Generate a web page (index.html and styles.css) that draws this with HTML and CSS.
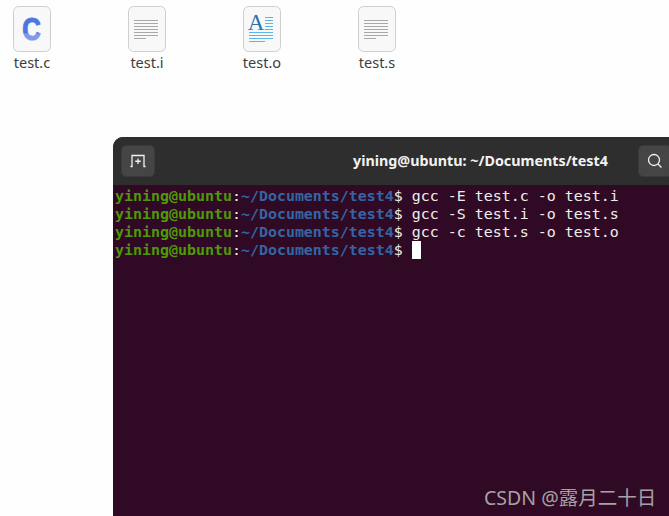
FILE: index.html
```html
<!DOCTYPE html>
<html lang="en">
<head>
<meta charset="utf-8">
<title>Terminal</title>
<link rel="stylesheet" href="styles.css">
</head>
<body>
<div class="files">
  <div class="file">
    <svg class="icon" width="38" height="46" viewBox="0 0 38 46">
      <defs><linearGradient id="cg" x1="0" y1="0" x2="0" y2="1"><stop offset="0.6" stop-color="#4f76e0"/><stop offset="0.65" stop-color="#7d9be8"/><stop offset="1" stop-color="#7d9be8"/></linearGradient></defs>
      <rect class="sheet" x="0.5" y="0.5" width="37" height="45" rx="5"/>
      <text class="c-letter" transform="translate(18.500 34) scale(0.8 1)" fill="url(#cg)">C</text>
    </svg>
    <span class="name">test.c</span>
  </div>
  <div class="file">
    <svg class="icon" width="38" height="46" viewBox="0 0 38 46">
      <rect class="sheet" x="0.5" y="0.5" width="37" height="45" rx="5"/>
      <path class="lines" d="M6 14.500H30M6 17.500H30M6 20.500H30M6 23.500H30M6 26.500H30M6 29.500H30M6 32.500H18"/>
    </svg>
    <span class="name">test.i</span>
  </div>
  <div class="file">
    <svg class="icon" width="38" height="46" viewBox="0 0 38 46">
      <rect class="sheet" x="0.5" y="0.5" width="37" height="45" rx="5"/>
      <text class="a-letter" x="13" y="24">A</text>
      <path class="blue-lines" d="M22 11.500H30M22 14.500H30M22 17.500H30M22 20.500H30M22 23.500H30M6 26.500H30M6 29.500H30M6 32.500H30M6 35.500H22"/>
    </svg>
    <span class="name">test.o</span>
  </div>
  <div class="file">
    <svg class="icon" width="38" height="46" viewBox="0 0 38 46">
      <rect class="sheet" x="0.5" y="0.5" width="37" height="45" rx="5"/>
      <path class="lines" d="M6 14.500H30M6 17.500H30M6 20.500H30M6 23.500H30M6 26.500H30M6 29.500H30M6 32.500H18"/>
    </svg>
    <span class="name">test.s</span>
  </div>
</div>
<section class="terminal">
  <header class="titlebar">
    <div class="btn">
      <svg width="16" height="14" viewBox="0 0 16 14"><path class="tab-icon" d="M0.500 12.500H2V1.500H14V12.500H15.500M8 4.500V10M5.250 7.250H10.750"/></svg>
    </div>
    <div class="title">yining@ubuntu: ~/Documents/test4</div>
    <div class="btn">
      <svg width="18" height="18" viewBox="0 0 18 18"><circle class="glass" cx="8" cy="8" r="5.500"/><path class="glass" d="M12 12L15.500 15.500"/></svg>
    </div>
  </header>
  <div class="screen">
    <div class="line"><b class="user">yining@ubuntu</b>:<b class="path">~/Documents/test4</b>$ gcc -E test.c -o test.i</div>
    <div class="line"><b class="user">yining@ubuntu</b>:<b class="path">~/Documents/test4</b>$ gcc -S test.i -o test.s</div>
    <div class="line"><b class="user">yining@ubuntu</b>:<b class="path">~/Documents/test4</b>$ gcc -c test.s -o test.o</div>
    <div class="line"><b class="user">yining@ubuntu</b>:<b class="path">~/Documents/test4</b>$ <span class="cursor"></span></div>
  </div>
</section>
<div class="watermark">CSDN @露月二十日</div>
</body>
</html>
```
FILE: styles.css
```css
html, body {
  margin: 0;
  height: 516px;
  overflow: hidden;
}
body {
  position: relative;
  background: #fefefe;
  font-family: "Noto Sans", sans-serif;
}
.files {
  display: flex;
  gap: 55px;
  padding: 6px 0 0 2px;
  height: 137px;
  box-sizing: border-box;
}
.file {
  width: 60px;
  display: flex;
  flex-direction: column;
  align-items: center;
}
.icon {
  display: block;
}
.sheet {
  fill: #f8f8f8;
  stroke: #cfcfcf;
}
.name {
  margin-top: 1px;
  font-size: 14.500px;
  line-height: 19px;
  color: #3d3d3d;
}
.c-letter {
  font: 700 32px "Liberation Sans", sans-serif;
  stroke: url(#cg);
  stroke-width: 1.200;
  text-anchor: middle;
}
.a-letter {
  font: 400 23px "Liberation Serif", serif;
  fill: #2f70ad;
  text-anchor: middle;
}
.lines {
  stroke: #a8a8a8;
  stroke-width: 1;
  fill: none;
}
.blue-lines {
  stroke: #5db5ec;
  stroke-width: 1;
  fill: none;
}
.terminal {
  margin-left: 113px;
  height: 379px;
  border-radius: 10px 0 0 0;
  overflow: hidden;
  background: #300a24;
}
.titlebar {
  display: flex;
  align-items: center;
  height: 48px;
  box-sizing: border-box;
  padding: 0 0 0 8px;
  background: #2e2e2e;
}
.btn {
  flex: none;
  width: 34px;
  height: 32px;
  box-sizing: border-box;
  border-radius: 5px;
  background: #454545;
  border: 1px solid #3a3a3a;
  display: flex;
  align-items: center;
  justify-content: center;
}
.tab-icon {
  stroke: #f2f2f2;
  stroke-width: 1.300;
  fill: none;
}
.title {
  flex: none;
  width: 285px;
  margin-left: 198px;
  font-size: 14.300px;
  font-weight: 700;
  line-height: 20px;
  color: #f2f2f2;
  white-space: nowrap;
}
.glass {
  stroke: #f2f2f2;
  stroke-width: 1.300;
  fill: none;
}
.screen {
  padding: 2px 0 0 2px;
  font-family: "DejaVu Sans Mono", monospace;
  font-size: 14.950px;
  line-height: 18px;
  color: #eeeeec;
}
.line {
  height: 18px;
  white-space: pre;
}
.user {
  color: #4e9a06;
}
.path {
  color: #3465a4;
}
.cursor {
  display: inline-block;
  width: 9px;
  height: 18px;
  vertical-align: top;
  background: #ffffff;
}
.watermark {
  position: absolute;
  left: 484px;
  top: 484px;
  font-family: "Noto Sans", "Noto Sans CJK SC", sans-serif;
  font-size: 19.500px;
  line-height: 27px;
  color: #a8a0a6;
  white-space: nowrap;
}
```
